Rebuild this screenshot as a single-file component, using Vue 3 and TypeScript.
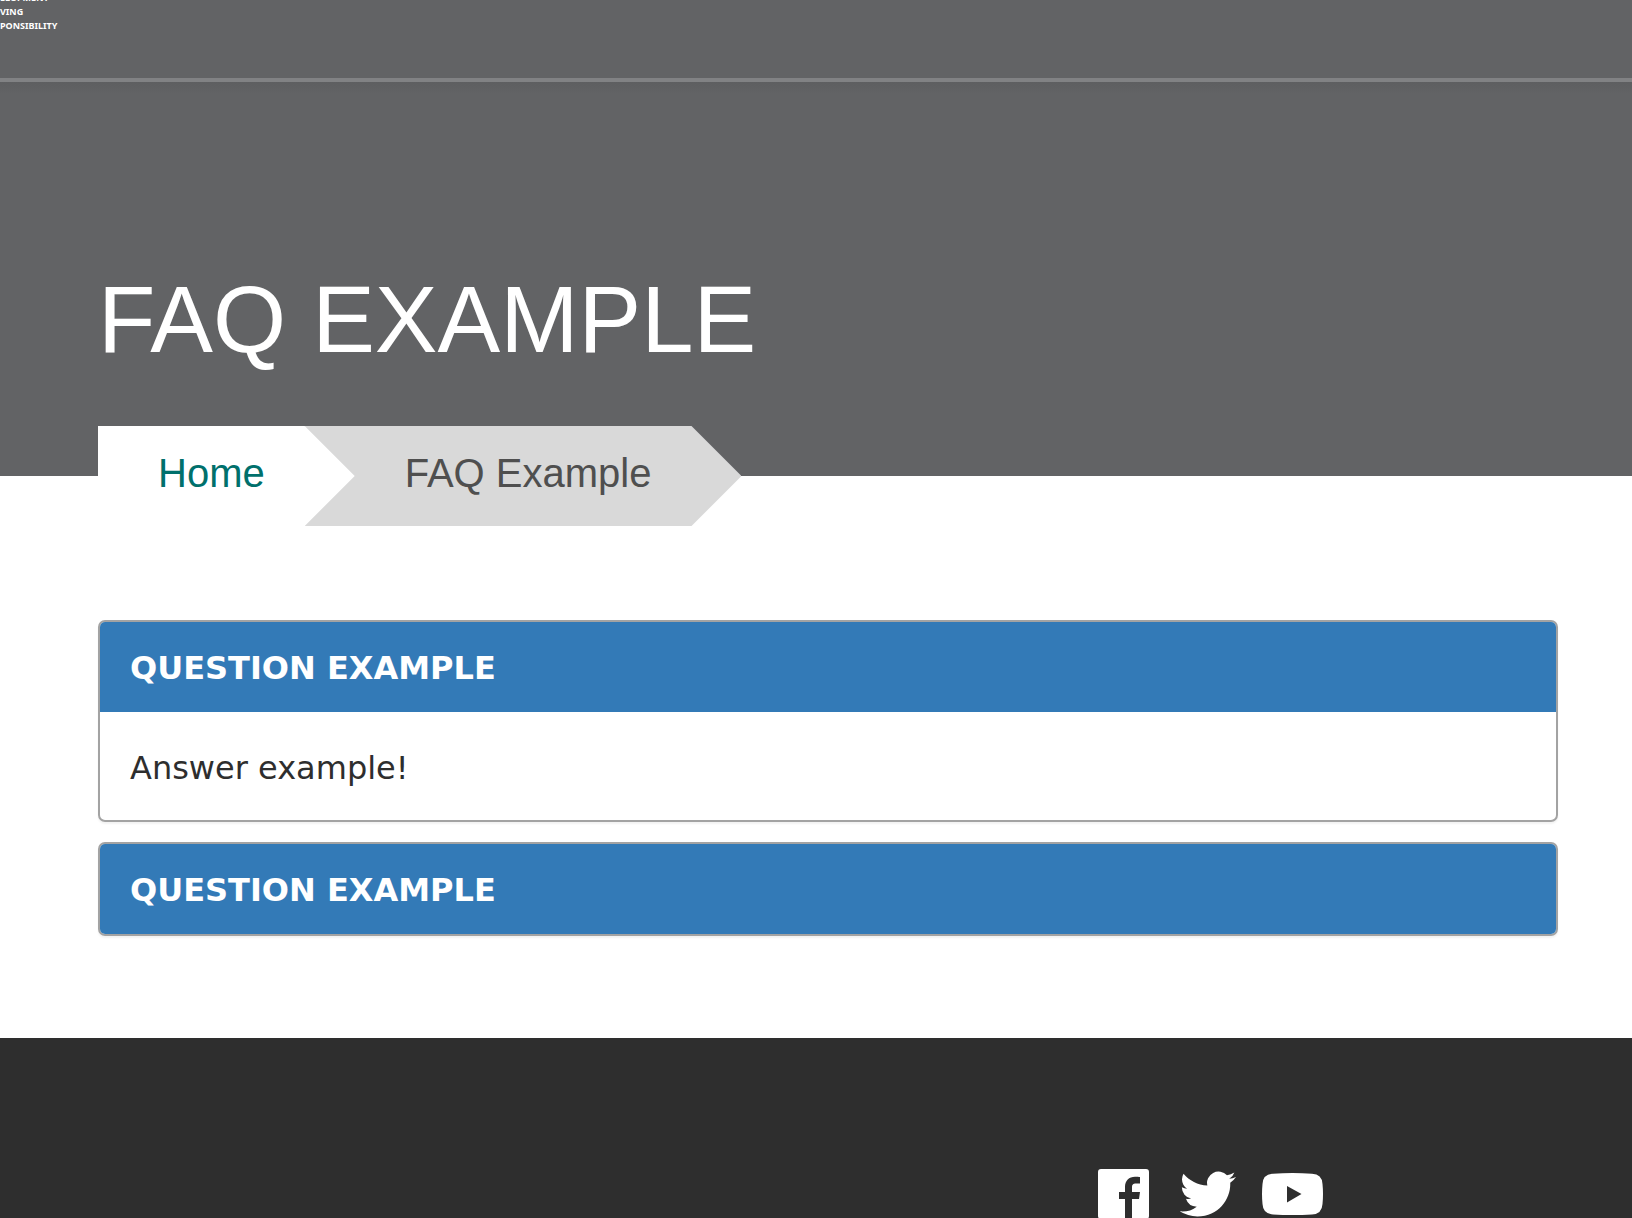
<script setup lang="ts">
import { ref } from 'vue'

interface Faq {
  question: string
  answer: string
  open: boolean
}

const logoLines = ['ELOPMENT', 'VING', 'PONSIBILITY']

const faqs = ref<Faq[]>([
  { question: 'QUESTION EXAMPLE', answer: 'Answer example!', open: true },
  { question: 'QUESTION EXAMPLE', answer: '', open: false },
])
</script>

<template>
  <div class="page">
    <header class="topbar">
      <a class="logo" href="#">
        <span v-for="line in logoLines" :key="line">{{ line }}</span>
      </a>
    </header>

    <section class="hero">
      <h1>FAQ EXAMPLE</h1>
      <nav class="crumbs" aria-label="Breadcrumb">
        <a class="crumb home" href="#">Home</a>
        <span class="crumb current" aria-current="page">FAQ Example</span>
      </nav>
    </section>

    <main class="content">
      <article v-for="(faq, i) in faqs" :key="i" class="card">
        <h2>
          <button type="button" :aria-expanded="faq.open" @click="faq.open = !faq.open">
            {{ faq.question }}
          </button>
        </h2>
        <p v-if="faq.open">{{ faq.answer }}</p>
      </article>
    </main>

    <footer class="footer">
      <a href="#" aria-label="Facebook">
        <svg width="51" height="50" viewBox="0 0 51 50">
          <path fill="#fff" d="M3 0H48Q51 0 51 3V47Q51 50 48 50H34V30H41L42 23H34V18.500C34 15.500 35 14.500 38 14.500H42V8C41 7.800 39 7.700 37 7.700C31 7.700 27 11.500 27 18V23H21V30H27V50H3Q0 50 0 47V3Q0 0 3 0Z" />
        </svg>
      </a>
      <a href="#" aria-label="Twitter">
        <svg width="61" height="46" viewBox="-2 2 26 20" preserveAspectRatio="none">
          <path fill="#fff" d="M23.953 4.570a10 10 0 0 1-2.825.775 4.958 4.958 0 0 0 2.163-2.723c-.951.555-2.005.959-3.127 1.184a4.920 4.920 0 0 0-8.384 4.482C7.690 8.095 4.067 6.130 1.640 3.162a4.822 4.822 0 0 0-.666 2.475c0 1.710.870 3.213 2.188 4.096a4.904 4.904 0 0 1-2.228-.616v.060a4.923 4.923 0 0 0 3.946 4.827 4.996 4.996 0 0 1-2.212.085 4.936 4.936 0 0 0 4.604 3.417 9.867 9.867 0 0 1-6.102 2.105c-.390 0-.779-.023-1.170-.067a13.995 13.995 0 0 0 7.557 2.209c9.053 0 13.998-7.496 13.998-13.985 0-.210 0-.420-.015-.630A9.935 9.935 0 0 0 24 4.590z" />
        </svg>
      </a>
      <a href="#" aria-label="YouTube">
        <svg width="61" height="42" viewBox="0 0 61 42">
          <path fill="#fff" fill-rule="evenodd" d="M11 .7Q30.500-.7 50 .7Q60 1 60.500 11Q61.500 21 60.500 31Q60 41 50 41.500Q30.500 42.500 11 41.500Q1 41 .5 31Q-.5 21 .5 11Q1 1 11 .7ZM25 13V29.500L39.500 21Z" />
        </svg>
      </a>
    </footer>
  </div>
</template>

<style>
body {
  margin: 0;
  background: #fff;
}
</style>

<style scoped>
.page {
  overflow: hidden;
  min-height: 100vh;
  display: flex;
  flex-direction: column;
  font-family: "Liberation Sans", Arial, sans-serif;
}

.topbar {
  height: 78px;
  border-bottom: 4px solid #818284;
  background: #626365;
}

.logo {
  display: flex;
  flex-direction: column;
  margin-top: -9px;
  color: #fff;
  font: 700 9px/14px "Noto Sans", sans-serif;
  text-decoration: none;
}

.hero {
  height: 394px;
  display: flex;
  flex-direction: column;
  padding: 0 74px 0 98px;
  background: linear-gradient(#5d5e60, #626365 12px);
}

h1 {
  margin: 182px 0 0;
  color: #fff;
  font-size: 94px;
  font-weight: 400;
  line-height: 112px;
}

.crumbs {
  display: flex;
  margin-top: 50px;
}

.crumb {
  box-sizing: border-box;
  height: 100px;
  font-size: 40px;
  line-height: 94px;
  white-space: nowrap;
  text-decoration: none;
  clip-path: polygon(0 0, calc(100% - 50px) 0, 100% 50%, calc(100% - 50px) 100%, 0 100%);
}

.home {
  z-index: 1;
  padding: 0 90px 0 60px;
  background: #fff;
  color: #00706c;
}

.current {
  margin-left: -50px;
  padding: 0 90px 0 100px;
  background: #d9d9d9;
  color: #4f4f4f;
}

.content {
  display: flex;
  flex-direction: column;
  gap: 20px;
  padding: 144px 74px 102px 98px;
}

.card {
  overflow: hidden;
  border: 2px solid #a3a3a3;
  border-radius: 7px;
  box-shadow: 0 2px 2px rgba(0, 0, 0, 0.05);
  font-family: "DejaVu Sans", Verdana, sans-serif;
  font-size: 32px;
}

h2 {
  margin: 0;
  font-size: 32px;
}

h2 button {
  display: block;
  width: 100%;
  height: 90px;
  padding: 2px 30px 0;
  border: 0;
  background: #337ab7;
  color: #fff;
  font: inherit;
  text-align: left;
  cursor: pointer;
}

.card p {
  margin: 0;
  padding: 32px 30px 28px;
  color: #2e2e2e;
  line-height: 48px;
}

.footer {
  flex: 1;
  display: flex;
  justify-content: flex-end;
  gap: 26px;
  box-sizing: border-box;
  height: 180px;
  padding: 131px 309px 0 0;
  overflow: hidden;
  background: #2e2e2e;
}

.footer a {
  display: flex;
  align-items: center;
  height: 50px;
}
</style>
